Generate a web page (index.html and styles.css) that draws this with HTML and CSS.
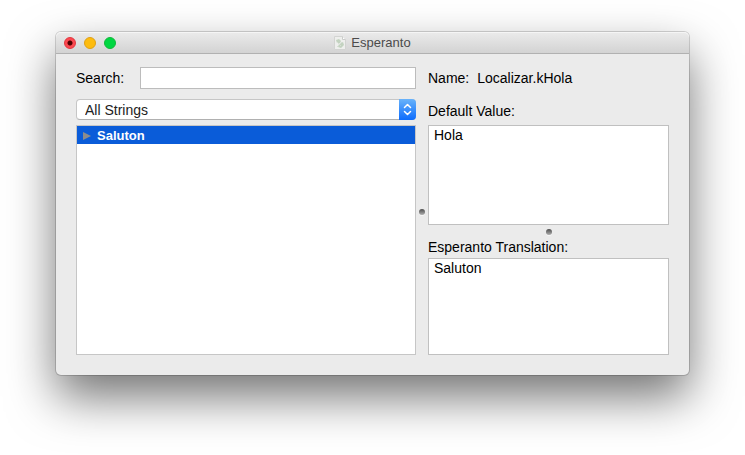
FILE: index.html
```html
<!DOCTYPE html>
<html lang="en">
<head>
<meta charset="utf-8">
<title>Esperanto</title>
<link rel="stylesheet" href="styles.css">
</head>
<body>
<main class="window">
  <header class="titlebar">
    <div class="lights">
      <button class="light close" aria-label="Close"></button>
      <button class="light minimize" aria-label="Minimize"></button>
      <button class="light zoom" aria-label="Zoom"></button>
    </div>
    <h1 class="title">
      <svg class="doc-icon" viewBox="0 0 12 14" aria-hidden="true">
        <path d="M.5 .5h8l3 3v10H.5z" fill="#eeefed" stroke="#d3d4d2"/>
        <path d="M8.500 .5v3h3" fill="#fff" stroke="#cbccca"/>
        <path d="M2 4l3-1 2 2-1 2-3 0zM5 8l4-2 1 3-3 3-3-1z" fill="#c3d3c0"/>
        <path d="M3 11l5-5M3 6l4 4" stroke="#d7dfd5" fill="none"/>
      </svg>
      Esperanto
    </h1>
  </header>
  <div class="content">
    <section class="pane">
      <div class="field search-row">
        <label for="search">Search:</label>
        <input class="search" id="search" type="text">
      </div>
      <div class="filter">
        <select class="filter-select" aria-label="Filter"><option>All Strings</option></select>
        <span class="stepper">
          <svg viewBox="0 0 17 21" aria-hidden="true"><path d="M5.500 8.500l3-3 3 3M5.500 12.500l3 3 3-3" fill="none" stroke="#fff" stroke-width="1.500" stroke-linecap="round" stroke-linejoin="round"/></svg>
        </span>
      </div>
      <div class="strings">
        <button class="string-row">
          <svg class="disclosure" viewBox="0 0 8 8" aria-hidden="true"><path d="M0 0l8 4-8 4z" fill="#8c8c8c"/></svg>
          Saluton
        </button>
      </div>
    </section>
    <div class="divider vertical"><span class="grip"></span></div>
    <section class="pane">
      <div class="field name-row"><span>Name:</span><span>Localizar.kHola</span></div>
      <label class="value-label" for="default-value">Default Value:</label>
      <textarea class="value default-value" id="default-value">Hola</textarea>
      <div class="divider horizontal"><span class="grip"></span></div>
      <label class="translation-label" for="translation">Esperanto Translation:</label>
      <textarea class="value" id="translation">Saluton</textarea>
    </section>
  </div>
</main>
</body>
</html>
```
FILE: styles.css
```css
* {
  box-sizing: border-box;
}

body {
  margin: 0;
  min-height: 100vh;
  padding: 32px 56px 80px;
  display: flex;
  background: #fff;
  color: #000;
  font: 14px/16px "Liberation Sans", Arial, sans-serif;
}

button,
input,
select,
textarea {
  margin: 0;
  font: inherit;
  color: inherit;
}

.window {
  flex: 1;
  min-width: 0;
  display: flex;
  flex-direction: column;
  border-radius: 5px;
  background: #ebebeb;
  box-shadow: 0 0 0 1px rgba(0, 0, 0, 0.16), 0 22px 48px rgba(0, 0, 0, 0.55);
}

.titlebar {
  height: 22px;
  display: grid;
  grid-template-columns: 1fr auto 1fr;
  align-items: center;
  padding: 0 8px;
  border-bottom: 1px solid #b1b1b1;
  border-radius: 5px 5px 0 0;
  background: linear-gradient(#ebebeb, #d3d3d3);
  box-shadow: inset 0 1px #f5f5f5;
}

.lights {
  display: flex;
  gap: 8px;
}

.light {
  width: 12px;
  height: 12px;
  padding: 0;
  border: 1px solid;
  border-radius: 50%;
}

.close {
  border-color: #e2343c;
  background: radial-gradient(circle, #4d0000 0 2px, #fc4850 3px);
}

.minimize {
  border-color: #e0a014;
  background: #fdbc0f;
}

.zoom {
  border-color: #12b83a;
  background: #00d742;
}

.title {
  margin: 0;
  display: flex;
  align-items: center;
  gap: 5px;
  font-size: 13px;
  font-weight: 400;
  color: #4b4b4b;
}

.doc-icon {
  width: 12px;
  height: 14px;
}

.content {
  flex: 1;
  display: grid;
  grid-template-columns: 340fr 12px 241fr;
  padding: 13px 20px 20px;
}

.pane {
  min-width: 0;
  display: flex;
  flex-direction: column;
}

.field {
  height: 22px;
  display: flex;
  align-items: center;
}

.search-row {
  justify-content: space-between;
  gap: 16px;
}

.search {
  flex: 1;
  max-width: 276px;
  height: 22px;
  padding: 2px 4px;
  border: 1px solid #bcbcbc;
  background: #fff;
}

.filter {
  position: relative;
  height: 21px;
  margin: 10px 0 5px;
}

.filter-select {
  width: 100%;
  height: 100%;
  padding: 0 24px 0 8px;
  appearance: none;
  border: 1px solid #c6c6c6;
  border-bottom-color: #b0b0b0;
  border-radius: 4px;
  background: #fff;
  color: #222;
}

.stepper {
  position: absolute;
  top: 0;
  right: 0;
  width: 17px;
  height: 100%;
  border-radius: 0 4px 4px 0;
  background: linear-gradient(#69b3fa, #0d6cfd);
  pointer-events: none;
}

.stepper svg {
  display: block;
  width: 17px;
  height: 21px;
}

.strings {
  flex: 1;
  border: 1px solid #c6c6c6;
  background: #fff;
}

.string-row {
  width: 100%;
  height: 18px;
  display: flex;
  align-items: center;
  gap: 6px;
  padding: 1px 6px 0;
  border: 0;
  background: #0a5cd9;
  color: #fff;
  font-size: 13px;
  font-weight: 700;
}

.disclosure {
  width: 8px;
  height: 8px;
}

.divider {
  display: flex;
  justify-content: center;
}

.vertical {
  align-items: center;
  padding-top: 2px;
}

.horizontal {
  height: 14px;
  align-items: center;
}

.grip {
  width: 6px;
  height: 6px;
  border-radius: 50%;
  background: linear-gradient(#4c4c4c, #b0b0b0);
  box-shadow: 0 1px #f6f6f6;
}

.name-row {
  gap: 8px;
}

.value-label {
  margin: 14px 0 6px;
}

.value {
  flex: 1;
  width: 100%;
  min-height: 0;
  padding: 1px 5px;
  resize: none;
  border: 1px solid #c0c0c0;
  border-radius: 0;
  background: #fff;
}

.default-value {
  flex-basis: 7px;
}

.translation-label {
  margin-bottom: 3px;
}
```
